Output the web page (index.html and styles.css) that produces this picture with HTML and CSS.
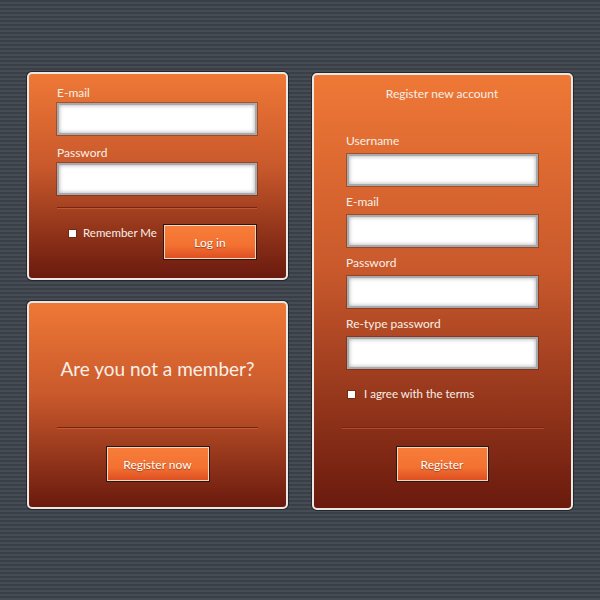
FILE: index.html
```html
<!DOCTYPE html>
<html lang="en">
<head>
    <meta charset="UTF-8">
    <meta name="viewport" content="width=device-width, initial-scale=1.0">
    <title>Login / Register</title>
    <link rel="stylesheet" href="styles.css">
</head>
<body>
    <div class="page">
        <div class="column">
            <form class="card login">
                <label class="field-label" for="login-email">E-mail</label>
                <input class="field" type="text" id="login-email">
                <label class="field-label" for="login-password">Password</label>
                <input class="field" type="password" id="login-password">
                <div class="divider"></div>
                <div class="login-row">
                    <label class="check"><span class="box"></span>Remember Me</label>
                    <button type="button" class="btn btn-login">Log in</button>
                </div>
            </form>
            <div class="card member">
                <h2 class="member-title">Are you not a member?</h2>
                <div class="divider"></div>
                <button type="button" class="btn btn-now">Register now</button>
            </div>
        </div>
        <form class="card register">
            <h1 class="register-title">Register new account</h1>
            <div class="fields">
                <label class="field-label" for="username">Username</label>
                <input class="field" type="text" id="username">
                <label class="field-label" for="reg-email">E-mail</label>
                <input class="field" type="text" id="reg-email">
                <label class="field-label" for="reg-password">Password</label>
                <input class="field" type="password" id="reg-password">
                <label class="field-label" for="reg-retype">Re-type password</label>
                <input class="field" type="password" id="reg-retype">
            </div>
            <label class="check terms"><span class="box"></span>I agree with the terms</label>
            <div class="divider wide"></div>
            <button type="button" class="btn btn-register">Register</button>
        </form>
    </div>
</body>
</html>
```
FILE: styles.css
```css
body {
    margin: 0;
    height: 600px;
    font-family: Lato, "Open Sans", sans-serif;
    color: #f8efe8;
    background: repeating-linear-gradient(#3a3f47 0 2px, #464c54 2px 4px);
}
.page {
    display: flex;
    gap: 24px;
    padding: 72px 0 0 27px;
}
.column {
    display: flex;
    flex-direction: column;
    gap: 21px;
}
.card {
    box-sizing: border-box;
    width: 261px;
    margin: 0;
    border: 2px solid #ebe7e4;
    border-radius: 5px;
    box-shadow: 0 0 0 1px #23272c;
    background: linear-gradient(#ef7836, #c9592c 45%, #6a1a0e);
}
.login {
    height: 208px;
    padding: 12px 29px 0 28px;
}
.member {
    height: 208px;
    padding: 0 28px;
    display: flex;
    flex-direction: column;
    align-items: center;
}
.register {
    height: 437px;
    margin-top: 1px;
    padding: 11px 33px 0 32px;
    display: flex;
    flex-direction: column;
}
.field-label {
    display: block;
    font-size: 12px;
    line-height: 14px;
    margin-bottom: 3px;
}
.field {
    display: block;
    box-sizing: border-box;
    width: 100%;
    height: 32px;
    margin: 0 0 11px;
    border: 2px solid #a4aaae;
    background: #fff;
    box-shadow: 0 0 0 1px rgba(60, 30, 20, 0.35), inset 0 0 4px rgba(0, 0, 0, 0.35);
}
.login .field:last-of-type {
    margin-bottom: 12px;
}
.divider {
    height: 0;
    border-top: 1px solid #7a2410;
    border-bottom: 1px solid rgba(240, 130, 80, 0.35);
    align-self: stretch;
}
.login-row {
    display: flex;
    align-items: flex-start;
    margin-top: 15px;
}
.check {
    display: flex;
    align-items: center;
    font-size: 11.5px;
    line-height: 14px;
    padding-left: 12px;
}
.login-row .check {
    margin-top: 2px;
}
.box {
    width: 7px;
    height: 7px;
    margin-right: 7px;
    background: #fff;
    box-shadow: 0 0 0 1px rgba(0, 0, 0, 0.2);
}
.btn {
    box-sizing: border-box;
    height: 36px;
    padding: 0;
    font-family: inherit;
    font-size: 12px;
    color: #fff;
    text-shadow: 0 1px 1px rgba(80, 20, 0, 0.5);
    border: 1px solid #2d1610;
    box-shadow: inset 0 0 0 1px #f5d5c0;
    background: linear-gradient(#f87e3a, #f37131 60%, #dc4d22);
    cursor: pointer;
}
.btn-login {
    width: 94px;
    margin-left: auto;
}
.member-title {
    margin: 54px 0 0;
    font-size: 19px;
    font-weight: normal;
    line-height: 24px;
    white-space: nowrap;
}
.member .divider {
    margin-top: 46px;
}
.btn-now {
    width: 104px;
    margin-top: 17px;
}
.register-title {
    margin: 0;
    font-size: 12px;
    font-weight: normal;
    line-height: 15px;
    text-align: center;
}
.fields {
    margin-top: 33px;
}
.fields .field-label {
    margin-bottom: 6px;
}
.fields .field {
    margin: 0 1px 9px 1px;
    width: 191px;
}
.terms {
    padding-left: 2px;
    margin-top: 9px;
}
.terms .box {
    margin-right: 9px;
}
.divider.wide {
    margin: 26px -6px 0 -4px;
}
.btn-register {
    width: 93px;
    margin-top: 17px;
    align-self: center;
}
```
